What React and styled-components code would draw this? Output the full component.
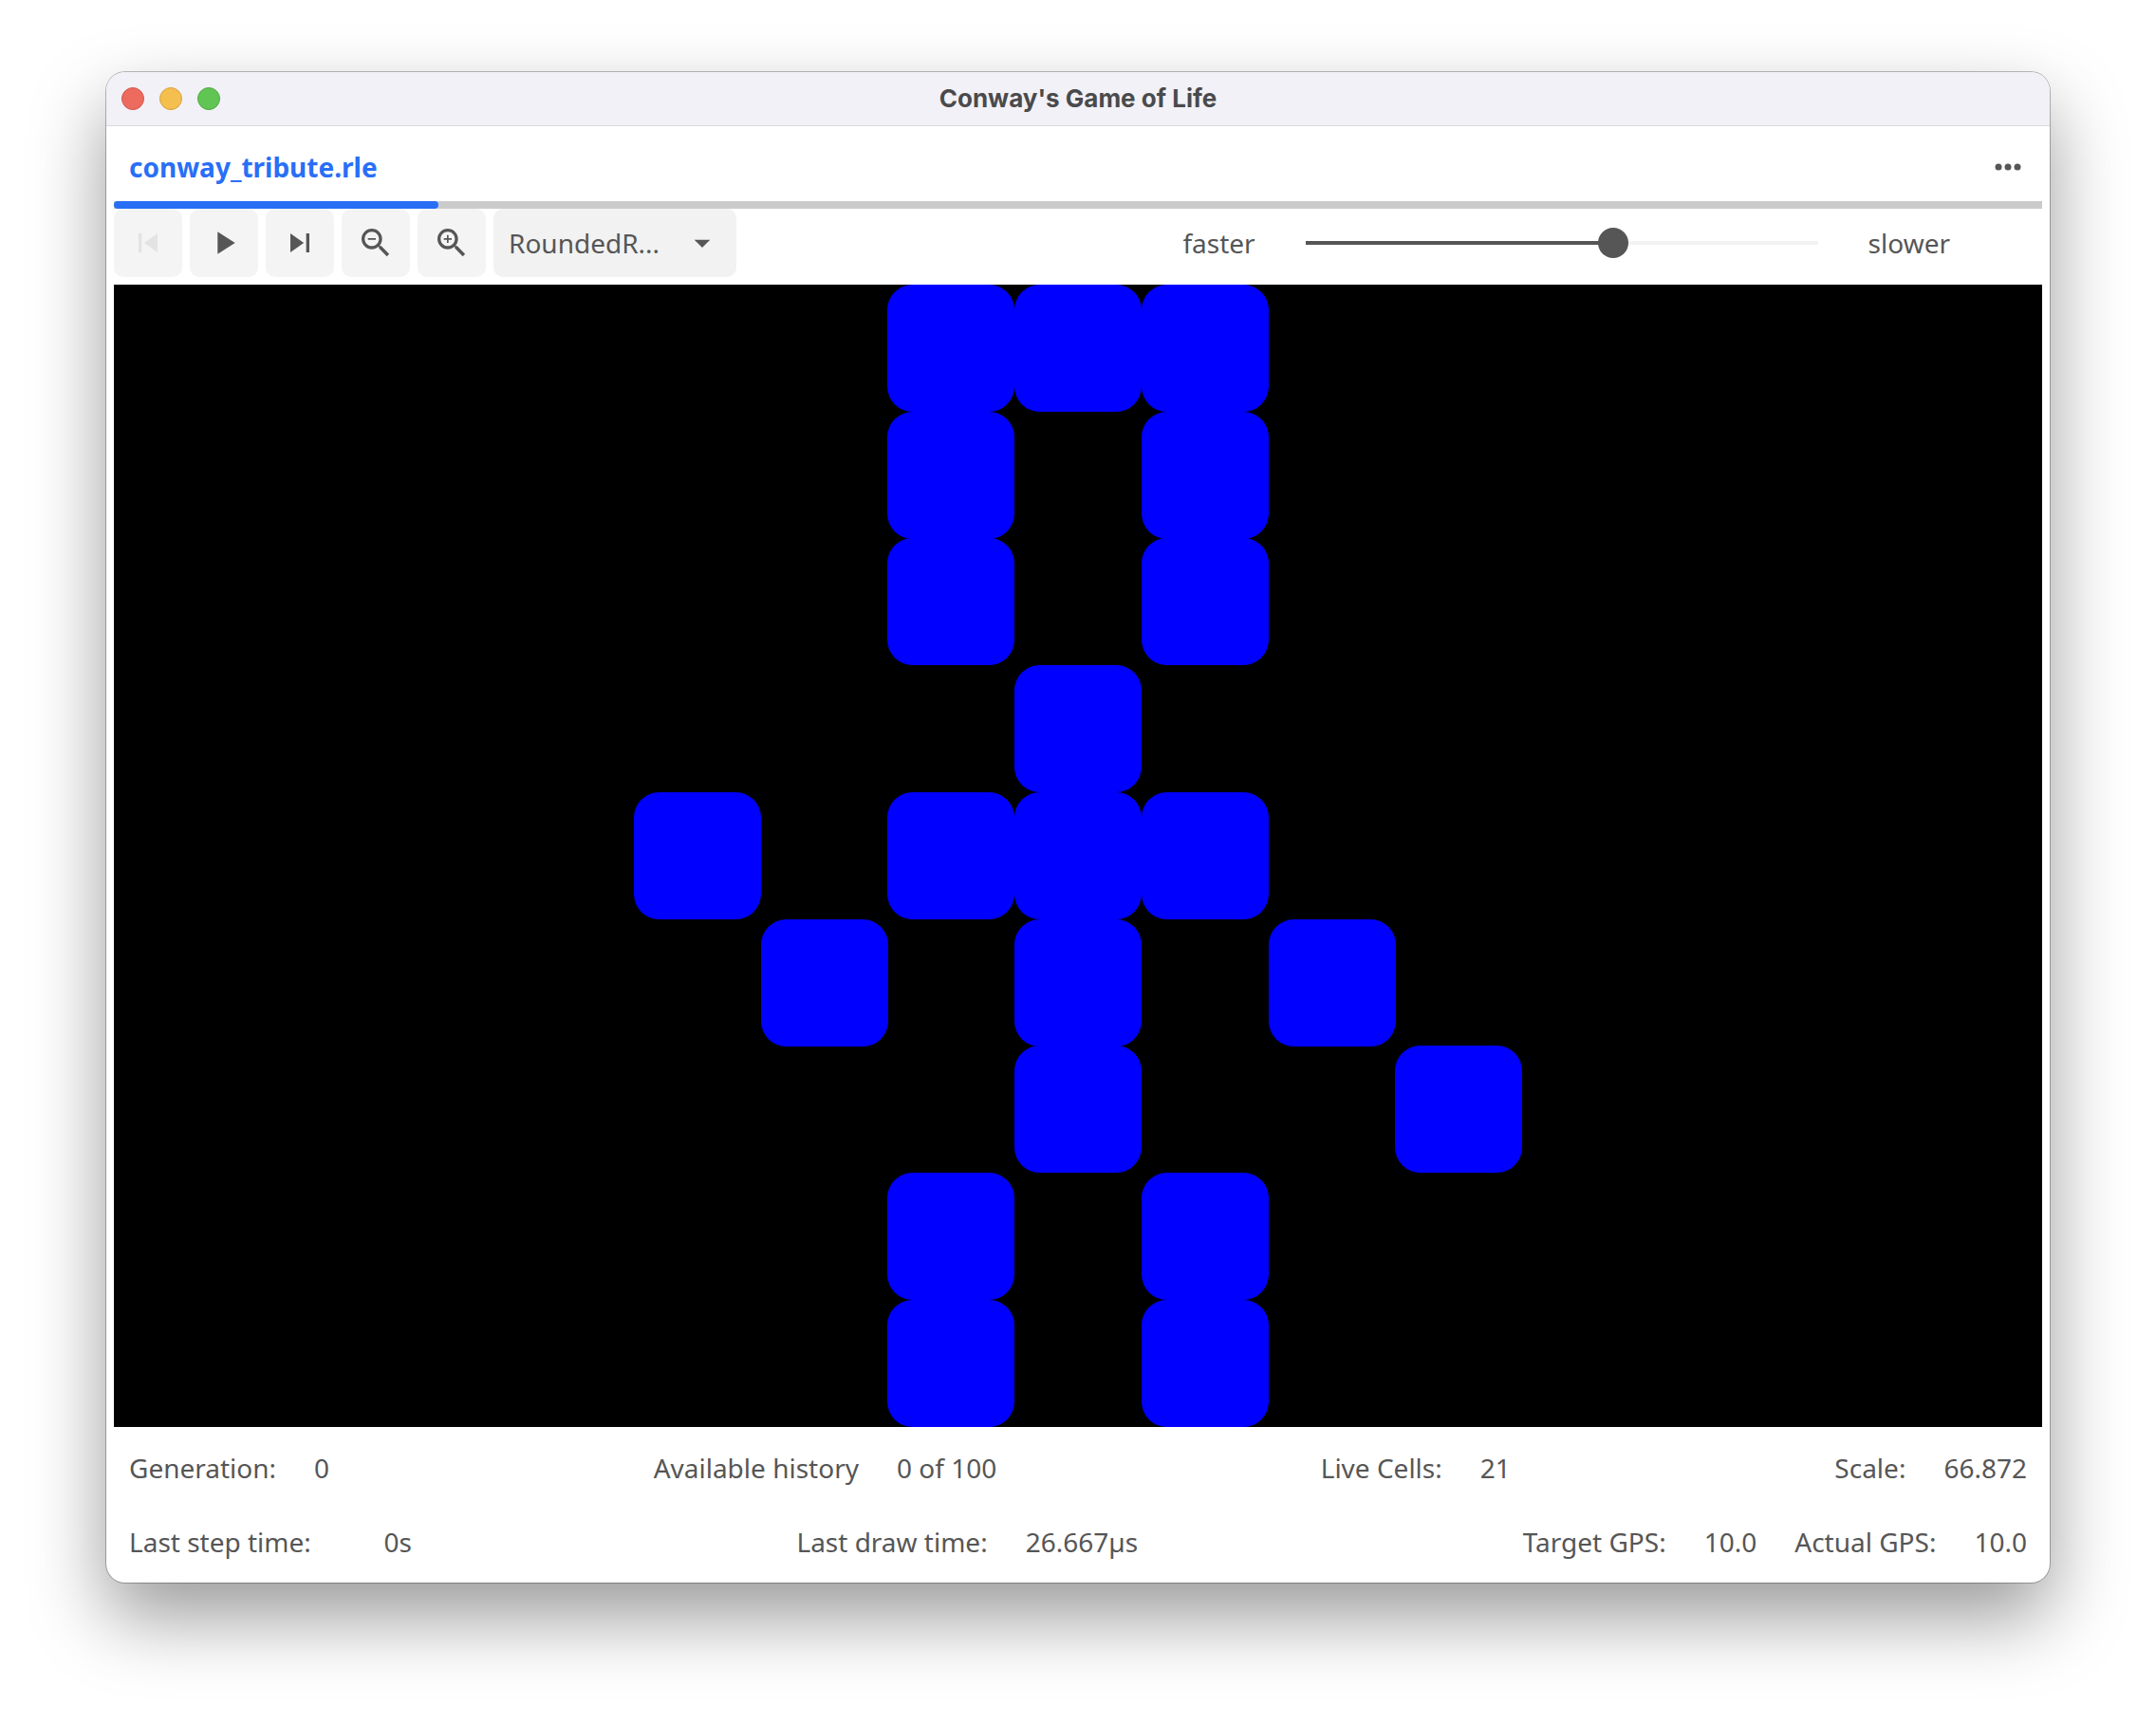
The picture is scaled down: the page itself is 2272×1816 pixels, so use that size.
import React, { useState } from "react";
import styled, { createGlobalStyle } from "styled-components";
import {
  MdPlayArrow,
  MdSkipNext,
  MdSkipPrevious,
  MdZoomIn,
  MdZoomOut,
} from "react-icons/md";

const GlobalStyle = createGlobalStyle`
  *, *::before, *::after { box-sizing: border-box; }
  body {
    margin: 0;
    background: #ffffff;
    color: #565656;
    font: 28px/38px "Noto Sans", "Open Sans", sans-serif;
  }
  button, select, input { font: inherit; color: inherit; margin: 0; }
`;

const Desktop = styled.div`
  padding: 76px 112px 148px;
`;

const Window = styled.main`
  display: flex;
  flex-direction: column;
  border-radius: 20px;
  background: #ffffff;
  box-shadow:
    0 0 0 1px rgba(0, 0, 0, 0.26),
    0 36px 80px rgba(0, 0, 0, 0.4);
`;

const TitleBar = styled.header`
  display: grid;
  grid-template-columns: 1fr auto 1fr;
  align-items: center;
  height: 56px;
  padding: 0 16px;
  border-radius: 20px 20px 0 0;
  background: #f2f1f7;
`;

const WindowControls = styled.div`
  display: flex;
  gap: 16px;
`;

const WindowControl = styled.button`
  width: 24px;
  height: 24px;
  padding: 0;
  border: 1px solid ${(p) => p.$edge};
  border-radius: 50%;
  background: ${(p) => p.$fill};
`;

const Title = styled.h1`
  margin: 0;
  color: #4a4a4c;
  font: 700 26px/32px Inter, sans-serif;
`;

const Body = styled.div`
  padding: 7px 8px 8px;
  border-top: 1px solid #d8d8da;
`;

const TabBar = styled.div`
  display: flex;
  justify-content: space-between;
`;

const Tab = styled.button`
  height: 72px;
  padding: 0 16px;
  border: 0;
  background: none;
  color: #296ff6;
  font-weight: 700;
`;

const MenuButton = styled.button`
  display: grid;
  place-items: center;
  width: 72px;
  height: 72px;
  padding: 0;
  border: 0;
  background: none;
`;

const TabUnderline = styled.div`
  height: 8px;
  background: #cbcbcb;
`;

const TabIndicator = styled.div`
  width: 342px;
  height: 8px;
  border-radius: 4px;
  background: #296ff6;
`;

const Toolbar = styled.div`
  display: flex;
  align-items: center;
  justify-content: space-between;
  padding-bottom: 8px;
`;

const ToolGroup = styled.div`
  display: flex;
  gap: 8px;
`;

const ToolButton = styled.button`
  display: grid;
  place-items: center;
  width: 72px;
  height: 72px;
  padding: 0;
  border: 0;
  border-radius: 10px;
  background: #f4f4f4;
  color: #565656;

  &:disabled { color: #e3e3e3; }
  svg { width: 40px; height: 40px; }
`;

const SelectBox = styled.div`
  position: relative;
  width: 256px;
`;

const Select = styled.select`
  appearance: none;
  width: 100%;
  height: 72px;
  padding: 0 56px 0 16px;
  border: 0;
  border-radius: 10px;
  background: #f2f2f2;
`;

const SelectArrow = styled.svg`
  position: absolute;
  top: 16px;
  right: 16px;
  width: 40px;
  height: 40px;
  pointer-events: none;
`;

const SpeedGroup = styled.div`
  display: flex;
  align-items: center;
  gap: 37px;
  padding-right: 97px;
`;

const Slider = styled.input`
  appearance: none;
  width: 572px;
  height: 32px;
  background: linear-gradient(
      to right,
      #565656 ${(p) => p.$percent}%,
      #f2f2f2 ${(p) => p.$percent}%
    )
    center / calc(100% - 32px) 4px no-repeat;

  &::-webkit-slider-thumb {
    appearance: none;
    width: 32px;
    height: 32px;
    border-radius: 50%;
    background: #565656;
  }
`;

const Board = styled.svg`
  display: block;
  width: 100%;
  background: #000000;
`;

const StatusRow = styled.dl`
  display: flex;
  justify-content: space-between;
  gap: 8px;
  margin: 8px 0 0;
`;

const StatusGroup = styled.div`
  display: flex;
  gap: 8px;
`;

const StatusLabel = styled.dt`
  padding: 16px;
`;

const StatusValue = styled.dd`
  min-width: ${(p) => (p.$wide ? "98px" : "0")};
  margin: 0;
  padding: 16px;
  text-align: right;
`;

const BOARD_WIDTH = 2032;
const BOARD_HEIGHT = 1204;
const SCALE = 133.744;
const CELL = Math.ceil(SCALE);

// Live columns of each row, counted from the middle of the board.
const ROWS = [
  [-1, 0, 1],
  [-1, 1],
  [-1, 1],
  [0],
  [-3, -1, 0, 1],
  [-2, 0, 2],
  [0, 3],
  [-1, 1],
  [-1, 1],
];

// Cells start on whole units so that neighbours meet without a seam.
function Cells() {
  return ROWS.flatMap((columns, row) =>
    columns.map((column) => (
      <rect
        key={`${row}:${column}`}
        x={Math.round(BOARD_WIDTH / 2 + (column - 0.5) * SCALE)}
        y={Math.round(row * SCALE)}
        width={CELL}
        height={CELL}
        rx={CELL * 0.2}
        fill="#0000ff"
      />
    ))
  );
}

function Status({ items }) {
  return (
    <StatusGroup>
      {items.map(([label, value, wide]) => (
        <React.Fragment key={label}>
          <StatusLabel>{label}</StatusLabel>
          <StatusValue $wide={wide}>{value}</StatusValue>
        </React.Fragment>
      ))}
    </StatusGroup>
  );
}

export default function App() {
  const [delay, setDelay] = useState(60);

  return (
    <>
      <GlobalStyle />
      <Desktop>
        <Window>
          <TitleBar>
            <WindowControls>
              <WindowControl aria-label="Close" $fill="#ec6a5e" $edge="#d5554a" />
              <WindowControl aria-label="Minimize" $fill="#f4bf4f" $edge="#d9a23c" />
              <WindowControl aria-label="Zoom window" $fill="#61c554" $edge="#52a842" />
            </WindowControls>
            <Title>Conway's Game of Life</Title>
          </TitleBar>
          <Body>
            <TabBar>
              <Tab aria-current="true">conway_tribute.rle</Tab>
              <MenuButton aria-label="More">
                <svg width="40" height="40" viewBox="0 0 40 40" fill="currentColor">
                  <circle cx="10" cy="20" r="3.5" />
                  <circle cx="20" cy="20" r="3.5" />
                  <circle cx="30" cy="20" r="3.5" />
                </svg>
              </MenuButton>
            </TabBar>
            <TabUnderline>
              <TabIndicator />
            </TabUnderline>
            <Toolbar>
              <ToolGroup>
                <ToolButton aria-label="Step back" disabled>
                  <MdSkipPrevious />
                </ToolButton>
                <ToolButton aria-label="Run">
                  <MdPlayArrow />
                </ToolButton>
                <ToolButton aria-label="Step forward">
                  <MdSkipNext />
                </ToolButton>
                <ToolButton aria-label="Zoom out">
                  <MdZoomOut />
                </ToolButton>
                <ToolButton aria-label="Zoom in">
                  <MdZoomIn />
                </ToolButton>
                <SelectBox>
                  <Select aria-label="Cell shape">
                    <option>RoundedR...</option>
                  </Select>
                  <SelectArrow viewBox="0 0 24 24" fill="currentColor">
                    <path d="M7 10l5 5 5-5z" />
                  </SelectArrow>
                </SelectBox>
              </ToolGroup>
              <SpeedGroup>
                <label htmlFor="delay">faster</label>
                <Slider
                  id="delay"
                  type="range"
                  min="0"
                  max="100"
                  value={delay}
                  $percent={delay}
                  onChange={(e) => setDelay(Number(e.target.value))}
                />
                <label htmlFor="delay">slower</label>
              </SpeedGroup>
            </Toolbar>
            <Board
              viewBox={`0 0 ${BOARD_WIDTH} ${BOARD_HEIGHT}`}
              role="img"
              aria-label="Game board"
            >
              <Cells />
            </Board>
            <StatusRow>
              <Status items={[["Generation:", "0"]]} />
              <Status items={[["Available history", "0 of 100"]]} />
              <Status items={[["Live Cells:", "21"]]} />
              <Status items={[["Scale:", "66.872"]]} />
            </StatusRow>
            <StatusRow>
              <Status items={[["Last step time:", "0s", true]]} />
              <Status items={[["Last draw time:", "26.667µs"]]} />
              <Status
                items={[
                  ["Target GPS:", "10.0"],
                  ["Actual GPS:", "10.0"],
                ]}
              />
            </StatusRow>
          </Body>
        </Window>
      </Desktop>
    </>
  );
}
